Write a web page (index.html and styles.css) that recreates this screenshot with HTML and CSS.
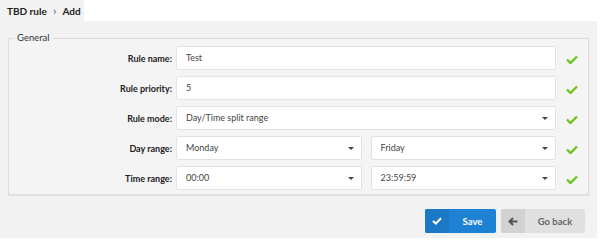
FILE: index.html
```html
<!DOCTYPE html>
<html>
<head>
<meta charset="utf-8">
<link rel="stylesheet" href="styles.css">
</head>
<body>
<div class="page">
  <div class="topbar">
    <div class="crumbs">TBD rule <span class="sep">›</span> Add</div>
  </div>
  <div class="content">
    <fieldset class="panel">
      <legend>General</legend>
      <div class="row">
        <label class="lbl">Rule name:</label>
        <div class="fields"><div class="inp">Test</div></div>
        <span class="ok"><svg width="12" height="9" viewBox="0 0 12 9"><path d="M1 4.5 L4.5 8 L11 1.5" fill="none" stroke="#6cc31c" stroke-width="2.4"/></svg></span>
      </div>
      <div class="row">
        <label class="lbl">Rule priority:</label>
        <div class="fields"><div class="inp">5</div></div>
        <span class="ok"><svg width="12" height="9" viewBox="0 0 12 9"><path d="M1 4.5 L4.5 8 L11 1.5" fill="none" stroke="#6cc31c" stroke-width="2.4"/></svg></span>
      </div>
      <div class="row">
        <label class="lbl">Rule mode:</label>
        <div class="fields"><div class="inp sel">Day/Time split range<i class="caret"></i></div></div>
        <span class="ok"><svg width="12" height="9" viewBox="0 0 12 9"><path d="M1 4.5 L4.5 8 L11 1.5" fill="none" stroke="#6cc31c" stroke-width="2.4"/></svg></span>
      </div>
      <div class="row">
        <label class="lbl">Day range:</label>
        <div class="fields two"><div class="inp sel">Monday<i class="caret"></i></div><div class="inp sel">Friday<i class="caret"></i></div></div>
        <span class="ok"><svg width="12" height="9" viewBox="0 0 12 9"><path d="M1 4.5 L4.5 8 L11 1.5" fill="none" stroke="#6cc31c" stroke-width="2.4"/></svg></span>
      </div>
      <div class="row">
        <label class="lbl">Time range:</label>
        <div class="fields two"><div class="inp sel">00:00<i class="caret"></i></div><div class="inp sel">23:59:59<i class="caret"></i></div></div>
        <span class="ok"><svg width="12" height="9" viewBox="0 0 12 9"><path d="M1 4.5 L4.5 8 L11 1.5" fill="none" stroke="#6cc31c" stroke-width="2.4"/></svg></span>
      </div>
    </fieldset>
    <div class="actions">
      <button class="btn save"><span class="ico"><svg width="10" height="8" viewBox="0 0 10 8"><path d="M1 4 L3.8 6.6 L9 1.3" fill="none" stroke="#fff" stroke-width="2"/></svg></span><span class="txt">Save</span></button>
      <button class="btn back"><span class="ico"><svg width="10" height="9" viewBox="0 0 10 9"><path d="M9.5 4.5 H2 M5 1 L1.5 4.5 L5 8" fill="none" stroke="#555" stroke-width="2"/></svg></span><span class="txt">Go back</span></button>
    </div>
  </div>
</div>
</body>
</html>
```
FILE: styles.css
```css
* { box-sizing: border-box; }
html, body { margin: 0; padding: 0; background: #fff; }
body { font-family: Lato, "Open Sans", sans-serif; font-size: 9px; color: #333; }
.page { width: 597px; height: 238px; display: flex; flex-direction: column; }
.topbar { height: 21px; background: #fff; display: flex; }
.crumbs { width: 84px; background: #f2f2f2; font-weight: bold; color: #222; padding: 5px 0 0 7px; font-size: 10px; line-height: 12px; }
.crumbs .sep { font-weight: normal; color: #555; margin: 0 4px; font-size: 11px; }
.content { flex: 1; background: #f2f2f2; padding: 11px 10px 0 8px; }
.panel { margin: 0; border: 1px solid #dcdcdc; box-shadow: 0 1px 1px rgba(0,0,0,0.06); background: #f4f4f4; padding: 2px 0 4px 0; width: 579px; display: flex; flex-direction: column; gap: 6px; }
.panel legend { padding: 0 3px; margin-left: 5px; font-size: 9.5px; color: #333; line-height: 12px; }
.row { display: flex; align-items: center; height: 24px; }
.lbl { width: 167px; text-align: right; font-weight: bold; color: #222; padding-right: 4px; }
.fields { width: 380px; display: flex; gap: 9px; }
.fields.two .inp { flex: 1; }
.inp { flex: 1; height: 24px; background: #fff; border: 1px solid #e2e2e2; border-radius: 2px; padding: 0 9px; line-height: 22px; color: #444; position: relative; }
.caret { position: absolute; right: 7px; top: 10px; width: 0; height: 0; border-left: 3px solid transparent; border-right: 3px solid transparent; border-top: 3px solid #444; }
.ok { width: 32px; display: flex; justify-content: center; padding-top: 2px; }
.actions { display: flex; justify-content: flex-end; gap: 5px; padding-top: 14px; padding-right: 2px; }
.btn { height: 24px; border: 0; border-radius: 2px; padding: 0; display: flex; align-items: stretch; font-family: Lato, sans-serif; font-size: 9.5px; font-weight: bold; overflow: hidden; }
.btn .ico { width: 24px; display: flex; align-items: center; justify-content: center; }
.btn .txt { flex: 1; display: flex; align-items: center; justify-content: center; }
.save { width: 71px; background: #1d82d4; color: #fff; }
.save .ico { background: #1a78c5; }
.back { width: 84px; background: #e0e0e0; color: #666; }
.back .ico { background: #d2d2d2; }
```
